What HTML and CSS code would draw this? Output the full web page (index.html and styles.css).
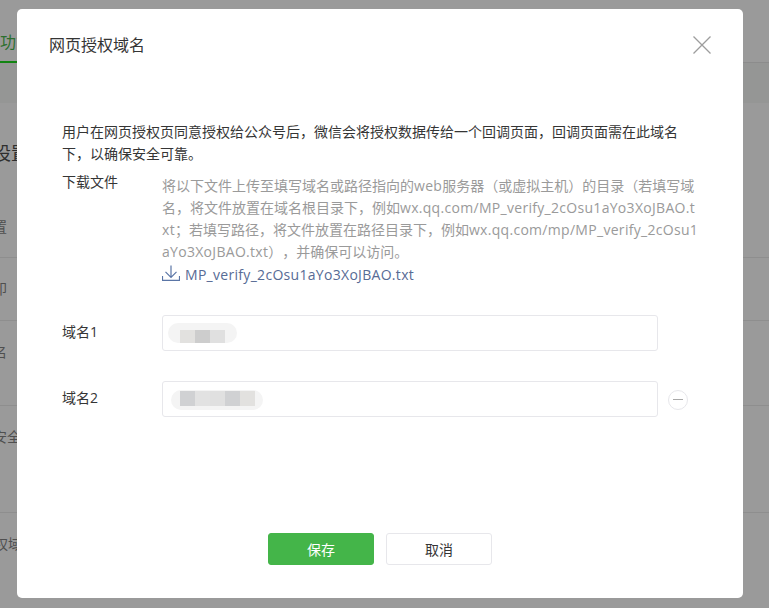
FILE: index.html
```html
<!DOCTYPE html>
<html lang="zh-CN">
<head>
<meta charset="utf-8">
<title>网页授权域名</title>
<link rel="stylesheet" href="styles.css">
</head>
<body>
<div class="page">
  <div class="tab-bar"><span class="tab">功能</span></div>
  <div class="band"></div>
  <div class="settings">
    <h2 class="settings-title">设置</h2>
    <div class="row row-a"><span>设置</span></div>
    <div class="row row-b"><span>印</span></div>
    <div class="row row-c"><span>域名</span></div>
    <div class="row row-d"><span>安全域名</span></div>
    <div class="row row-e"><span>网页授权域名</span></div>
  </div>
</div>
<div class="dialog">
  <header class="dialog-head">
    <h1 class="dialog-title">网页授权域名</h1>
    <svg class="close" width="20" height="20" viewBox="0 0 20 20"><path d="M1.500 1.500 18.500 18.500M18.500 1.500 1.500 18.500" stroke="#9d9d9d" stroke-width="1.300" fill="none"/></svg>
  </header>
  <div class="dialog-body">
    <p class="intro">用户在网页授权页同意授权给公众号后，微信会将授权数据传给一个回调页面，回调页面需在此域名下，以确保安全可靠。</p>
    <div class="field field-file">
      <label class="field-label">下载文件</label>
      <div class="file-info">
        <p class="desc">将以下文件上传至填写域名或路径指向的<span class="latin">web</span>服务器（或虚拟主机）的目录（若填写域名，将文件放置在域名根目录下，例如<span class="latin">wx.qq.com/MP_verify_2cOsu1aYo3XoJBAO.txt</span>；若填写路径，将文件放置在路径目录下，例如<span class="latin">wx.qq.com/mp/MP_verify_2cOsu1aYo3XoJBAO.txt</span>），并确保可以访问。</p>
        <a class="download">
          <svg class="download-icon" width="18" height="16" viewBox="0 0 18 16"><path d="M9 .5V12M3.500 6.800 9 12.300 14.500 6.800M.5 11V15.300H17.500V11" stroke="#5a75a6" stroke-width="1.200" fill="none"/></svg>
          <span class="latin">MP_verify_2cOsu1aYo3XoJBAO.txt</span>
        </a>
      </div>
    </div>
    <div class="field field-domain">
      <label class="field-label">域名<span class="latin">1</span></label>
      <div class="input">
        <div class="mask mask-one">
          <i class="m1"></i><i class="m2"></i><i class="m3"></i>
        </div>
      </div>
    </div>
    <div class="field field-domain field-second">
      <label class="field-label">域名<span class="latin">2</span></label>
      <div class="input">
        <div class="mask mask-two">
          <i class="m4"></i><i class="m5"></i><i class="m3"></i><i class="m4"></i><i class="m1"></i>
        </div>
      </div>
      <span class="remove"></span>
    </div>
  </div>
  <footer class="dialog-foot">
    <button class="btn btn-primary">保存</button>
    <button class="btn">取消</button>
  </footer>
</div>
</body>
</html>
```
FILE: styles.css
```css
html, body {
  margin: 0;
  padding: 0;
  height: 100%;
  overflow: hidden;
}
body {
  font-family: "Open Sans", "Noto Sans CJK SC", sans-serif;
  font-size: 14px;
  color: #353535;
  background: #9a9a9a;
  text-spacing-trim: space-all;
}
.latin { letter-spacing: .3px; }
.page {
  height: 608px;
  background: #9a9a9a;
  overflow: hidden;
}
.tab-bar {
  height: 62px;
  border-bottom: 1px solid #8c8c8c;
}
.tab {
  display: block;
  width: 17px;
  height: 63px;
  box-sizing: border-box;
  white-space: nowrap;
  line-height: 84px;
  font-size: 16px;
  color: #2b6f2d;
  border-bottom: 2px solid #128412;
}
.band {
  height: 40px;
  background: #959695;
}
.settings-title {
  margin: 0 0 0 -7px;
  padding-top: 37px;
  font-size: 18px;
  font-weight: 400;
  line-height: 26px;
  color: #2e2e2e;
}
.row {
  color: #4f4f4f;
  line-height: 20px;
  padding-top: 21px;
  box-sizing: border-box;
  white-space: nowrap;
  border-top: 1px solid #8e8e8e;
}
.row span { display: block; }
.row-a { height: 62px; margin-top: 29px; padding-top: 22px; border-top: 0; }
.row-a span { margin-left: -21px; }
.row-b { height: 63px; }
.row-b span { margin-left: -7px; }
.row-c { height: 85px; }
.row-c span { margin-left: -21px; }
.row-d { height: 107px; }
.row-d span { margin-left: -7px; }
.row-e { height: 96px; }
.row-e span { margin-left: -48px; }
.dialog {
  position: absolute;
  left: 17px;
  top: 9px;
  width: 726px;
  height: 589px;
  background: #fff;
  border-radius: 5px;
  display: flex;
  flex-direction: column;
}
.dialog-head {
  height: 72px;
  padding: 0 32px;
  display: flex;
  align-items: center;
  justify-content: space-between;
  flex: none;
}
.dialog-title {
  margin: 0;
  font-size: 16px;
  font-weight: 400;
  color: #353535;
  line-height: 24px;
}
.close { display: block; margin-right: -1px; }
.dialog-body {
  flex: 1;
  padding: 40px 45px 0;
}
.intro {
  margin: 0;
  line-height: 22px;
  color: #353535;
}
.field { display: flex; }
.field-label {
  width: 100px;
  flex: none;
  color: #353535;
  line-height: 22px;
}
.field-file { margin-top: 6px; }
.file-info { flex: none; width: 539px; padding-top: 4px; }
.desc {
  margin: 0;
  line-height: 22px;
  color: #9a9a9a;
  word-break: break-all;
}
.download {
  display: flex;
  align-items: center;
  gap: 5px;
  height: 22px;
  color: #576b95;
}
.download-icon { display: block; margin-top: -3px; }
.field-domain { align-items: center; height: 36px; margin-top: 30px; }
.field-domain .field-label { margin-top: -2px; }
.input {
  width: 496px;
  height: 36px;
  box-sizing: border-box;
  border: 1px solid #e7e7eb;
  border-radius: 3px;
  background: #fff;
}
.mask {
  display: flex;
  height: 20px;
  background: #f4f4f4;
  border-radius: 10px;
  overflow: hidden;
}
.mask i { display: block; width: 15px; height: 15px; }
.mask-one { width: 69px; margin: 7px 0 0 5px; padding-left: 12px; box-sizing: border-box; }
.mask-one i { margin-top: 7px; }
.mask-two { width: 92px; margin: 8px 0 0 8px; padding-left: 9px; box-sizing: border-box; }
.mask-two i { margin-top: 1px; }
.m1 { background: #e2e1df; }
.m2 { background: #cdcdcd; }
.m3 { background: #e0e0e0; }
.m4 { background: #d0d1d3; }
.m5 { background: #e2e2e2; }
.remove {
  position: relative;
  flex: none;
  width: 20px;
  height: 20px;
  margin: 2px 0 0 10px;
  border: 1px solid #e7e7eb;
  border-radius: 50%;
  box-sizing: border-box;
}
.remove::before {
  content: "";
  position: absolute;
  left: 4px;
  right: 4px;
  top: 8px;
  height: 1px;
  background: #a8a8a8;
}
.dialog-foot {
  flex: none;
  display: flex;
  justify-content: center;
  gap: 12px;
  padding-bottom: 33px;
}
.btn {
  width: 106px;
  height: 32px;
  padding: 0;
  font: inherit;
  color: #353535;
  background: #fff;
  border: 1px solid #e7e7eb;
  border-radius: 3px;
}
.btn-primary {
  color: #fff;
  background: #44b549;
  border-color: #44b549;
}
```
